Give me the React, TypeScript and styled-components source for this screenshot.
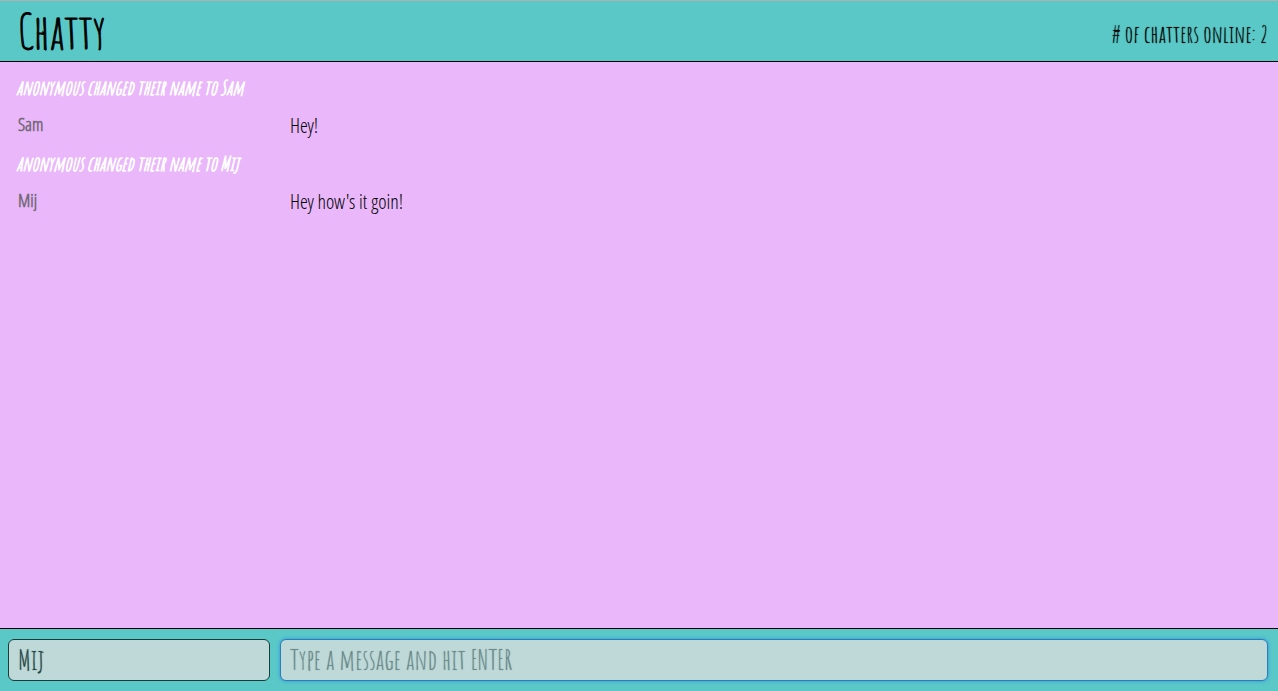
import React, { useState } from 'react';
import styled, { createGlobalStyle } from 'styled-components';

const display = `'Amatic SC', 'Liberation Sans Narrow', sans-serif`;
const condensed = `'Open Sans Condensed Light', 'Open Sans Condensed', 'Open Sans', sans-serif`;

const GlobalStyle = createGlobalStyle`
  *, *::before, *::after { box-sizing: border-box; }
  body { margin: 0; background: #e9b7fa; color: #000; font-family: ${condensed}; }
`;

const Page = styled.div`
  display: flex;
  flex-direction: column;
  min-height: 100vh;
`;

const Navbar = styled.header`
  display: flex;
  align-items: center;
  justify-content: space-between;
  height: 62px;
  padding: 0 10px 0 18px;
  background: #5ac8c7;
  border-top: 1px solid #b0b0b0;
  border-bottom: 1px solid #000;
  font-family: ${display};
`;

const Brand = styled.a`
  color: #000;
  font-size: 48px;
  font-weight: 400;
  line-height: 60px;
  text-decoration: none;
  -webkit-text-stroke: 1px #000;
`;

const Online = styled.span`
  padding-top: 6px;
  font-size: 24px;
  font-weight: 400;
  line-height: 30px;
  text-shadow: 0 0 1px #000;
`;

const Messages = styled.main`
  flex: 1;
  padding: 7px 16px;
`;

const Notice = styled.p`
  margin: 0;
  color: #fff;
  font-family: ${display};
  font-size: 20px;
  font-style: italic;
  font-weight: 400;
  line-height: 38px;
  -webkit-text-stroke: 1px #fff;
`;

const Message = styled.div`
  display: grid;
  grid-template-columns: 262px 1fr;
  gap: 10px;
  padding-left: 2px;
  line-height: 38px;
`;

const Username = styled.span`
  color: #756a79;
  font-size: 18px;
  font-weight: 700;
  line-height: 35px;
`;

const Content = styled.span`
  font-size: 20px;
  font-weight: 300;
`;

const ChatBar = styled.form`
  display: grid;
  grid-template-columns: 262px 1fr;
  gap: 10px;
  padding: 10px 10px 10px 8px;
  background: #5ac8c7;
  border-top: 1px solid #000;
`;

const Field = styled.input<{ $active?: boolean }>`
  width: 100%;
  min-width: 0;
  height: 42px;
  padding: 0 9px 2px;
  color: #264545;
  background: #bfd9d9;
  border: 1px solid ${p => (p.$active ? '#2c7eae' : '#1c3c3c')};
  border-radius: 6px;
  box-shadow: ${p => (p.$active ? '0 0 3px 1px #3fa5e0' : 'none')};
  outline: none;
  font-family: ${display};
  font-size: 28px;
  text-shadow: 0 0 1px currentColor;

  &::placeholder { color: #6c8a8a; opacity: 1; }
`;

type Entry = { kind: 'notice'; text: string } | { kind: 'message'; user: string; text: string };

const entries: Entry[] = [
  { kind: 'notice', text: 'anonymous changed their name to Sam' },
  { kind: 'message', user: 'Sam', text: 'Hey!' },
  { kind: 'notice', text: 'anonymous changed their name to Mij' },
  { kind: 'message', user: 'Mij', text: "Hey how's it goin!" },
];

export default function App() {
  const [name, setName] = useState('Mij');
  const [draft, setDraft] = useState('');
  return (
    <Page>
      <GlobalStyle />
      <Navbar>
        <Brand href="/">Chatty</Brand>
        <Online># of chatters online: 2</Online>
      </Navbar>
      <Messages>
        {entries.map((entry, i) =>
          entry.kind === 'notice' ? (
            <Notice key={i}>{entry.text}</Notice>
          ) : (
            <Message key={i}>
              <Username>{entry.user}</Username>
              <Content>{entry.text}</Content>
            </Message>
          ),
        )}
      </Messages>
      <ChatBar onSubmit={e => e.preventDefault()}>
        <Field aria-label="Your name" value={name} onChange={e => setName(e.target.value)} />
        <Field
          $active
          aria-label="Message"
          placeholder="Type a message and hit ENTER"
          value={draft}
          onChange={e => setDraft(e.target.value)}
        />
      </ChatBar>
    </Page>
  );
}
